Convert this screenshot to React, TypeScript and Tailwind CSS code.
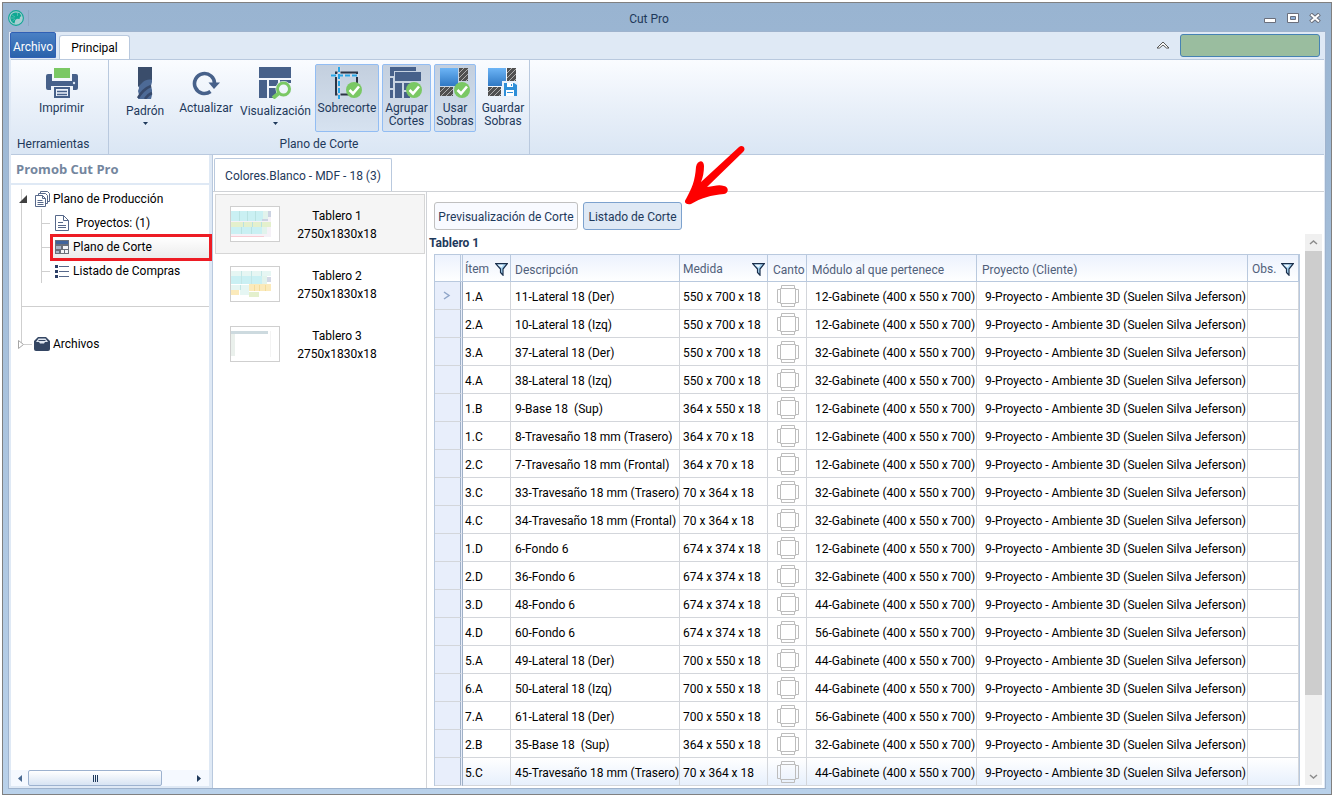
import React from 'react'
import clsx from 'clsx'

interface Piece {
  item: string
  desc: string
  size: string
  module: number
}

const PIECES: Piece[] = [
  { item: '1.A', desc: '11-Lateral 18 (Der)', size: '550 x 700 x 18', module: 12 },
  { item: '2.A', desc: '10-Lateral 18 (Izq)', size: '550 x 700 x 18', module: 12 },
  { item: '3.A', desc: '37-Lateral 18 (Der)', size: '550 x 700 x 18', module: 32 },
  { item: '4.A', desc: '38-Lateral 18 (Izq)', size: '550 x 700 x 18', module: 32 },
  { item: '1.B', desc: '9-Base 18  (Sup)', size: '364 x 550 x 18', module: 12 },
  { item: '1.C', desc: '8-Travesaño 18 mm (Trasero)', size: '364 x 70 x 18', module: 12 },
  { item: '2.C', desc: '7-Travesaño 18 mm (Frontal)', size: '364 x 70 x 18', module: 12 },
  { item: '3.C', desc: '33-Travesaño 18 mm (Trasero)', size: '70 x 364 x 18', module: 32 },
  { item: '4.C', desc: '34-Travesaño 18 mm (Frontal)', size: '70 x 364 x 18', module: 32 },
  { item: '1.D', desc: '6-Fondo 6', size: '674 x 374 x 18', module: 12 },
  { item: '2.D', desc: '36-Fondo 6', size: '674 x 374 x 18', module: 32 },
  { item: '3.D', desc: '48-Fondo 6', size: '674 x 374 x 18', module: 44 },
  { item: '4.D', desc: '60-Fondo 6', size: '674 x 374 x 18', module: 56 },
  { item: '5.A', desc: '49-Lateral 18 (Der)', size: '700 x 550 x 18', module: 44 },
  { item: '6.A', desc: '50-Lateral 18 (Izq)', size: '700 x 550 x 18', module: 44 },
  { item: '7.A', desc: '61-Lateral 18 (Der)', size: '700 x 550 x 18', module: 56 },
  { item: '2.B', desc: '35-Base 18  (Sup)', size: '364 x 550 x 18', module: 32 },
  { item: '5.C', desc: '45-Travesaño 18 mm (Trasero)', size: '70 x 364 x 18', module: 44 },
]

/* ---------- icons ---------- */

const AppLogo = () => (
  <svg width="16" height="16" viewBox="0 0 16 16">
    <circle cx="8" cy="8" r="7.4" fill="#a9cfd3" stroke="#12a594" strokeWidth="1.1" />
    <path d="M7.500 2.500C3.500 3 2 6 2.500 9c.5 2.500 2 4 4 4.500l.8-3.500L9 8.800l2.500.2.500-2 1.500-1-2-3z" fill="#0fa893" />
    <path d="M4 5l3 2M3 8h3.500M4.500 11L7 9M9.500 3v3" stroke="#7cc6be" strokeWidth=".6" />
  </svg>
)

const PrinterIcon = () => (
  <svg width="32" height="30" viewBox="0 0 32 30">
    <path d="M8 0h16v10H8z" fill="#7ac864" />
    <path d="M2 6h4v7h20V6h4a2 2 0 0 1 2 2v12a2 2 0 0 1-2 2h-3v-4H5v4H2a2 2 0 0 1-2-2V8a2 2 0 0 1 2-2z" fill="#47618a" />
    <circle cx="28" cy="15" r="1.200" fill="#e3ecf7" />
    <path d="M9 20h14v9H9z" fill="#edf3fb" stroke="#47618a" strokeWidth="2" />
    <path d="M11 23.500h10M11 26.500h10" stroke="#47618a" strokeWidth="1.400" />
  </svg>
)

const DrillIcon = () => (
  <svg width="16" height="32" viewBox="0 0 16 32">
    <path d="M1 0h14v15l-1 4 1 4v5l-1 4H1l1-4-1-4 1-3-1-5z" fill="#4d6a96" />
    <path d="M1 0h14v13C12 12 8 13 6 15l-5 5z" fill="#3a4d6b" />
    <path d="M14 19C9 21 5 24 1 31M15 26c-3 1-5 3-7 6" stroke="#37496a" strokeWidth="2.500" fill="none" />
  </svg>
)

const RefreshIcon = () => (
  <svg width="28" height="25" viewBox="0 0 28 25">
    <path d="M18.500 20.500A10 10 0 1 1 22.500 13" fill="none" stroke="#47618a" strokeWidth="3.600" />
    <path d="M16.500 11.500H28l-6 6.500z" fill="#47618a" />
  </svg>
)

const ViewIcon = () => (
  <svg width="33" height="32" viewBox="0 0 33 32">
    <path d="M0 0h32v11H0zM0 13h8v18H0zM10 13h9v6h-9zM10 21h7v10h-7zM21 13h11v3H21z" fill="#47618a" />
    <circle cx="24.500" cy="22" r="8" fill="#e6eef8" />
    <circle cx="24.500" cy="22" r="6" fill="#eef5fb" stroke="#7ac864" strokeWidth="3" />
    <path d="M20 26l-6 5" stroke="#7ac864" strokeWidth="4" />
  </svg>
)

const Check = ({ x, y }: { x: number; y: number }) => (
  <g transform={`translate(${x} ${y})`}>
    <circle cx="8" cy="8" r="8" fill="#7ac864" />
    <path d="M3.500 8l3.500 3.500 6-7" stroke="#fff" strokeWidth="2.600" fill="none" />
  </g>
)

const OvercutIcon = () => (
  <svg width="32" height="32" viewBox="0 0 32 32">
    <path d="M5 5.500h21v22H5z" fill="none" stroke="#2c3444" strokeWidth="2" />
    <path d="M8 0v32M0 8.500h28" stroke="#cfdae8" strokeWidth="3" />
    <path d="M8 0v32M0 8.500h28" stroke="#27a5e6" strokeWidth="2" strokeDasharray="5 2" />
    <Check x={15} y={15} />
  </svg>
)

const GroupIcon = () => (
  <svg width="33" height="32" viewBox="0 0 33 32">
    <path d="M0 0h26v4H4v5H0zM5 5h26v9H5zM0 11h3v10H0zM5 16h7v15H5zM0 23h3v8H0zM14 16h12v7H14zM14 25h6v6h-6z" fill="#47618a" />
    <Check x={16} y={15} />
  </svg>
)

const Hatch = ({ id }: { id: string }) => (
  <>
    <defs>
      <linearGradient id={`${id}-g`} x1="0" y1="0" x2="0" y2="1">
        <stop offset="0" stopColor="#6db5f6" />
        <stop offset="1" stopColor="#2f78c4" />
      </linearGradient>
      <pattern id={`${id}-h`} width="5" height="5" patternUnits="userSpaceOnUse">
        <path d="M0 0h5v5H0z" fill="#505050" />
        <path d="M-1 1l2-2M0 5l5-5M4 6l2-2" stroke="#b0b0b0" strokeWidth="1" />
      </pattern>
    </defs>
    <path d="M0 1h18v18H0z" fill={`url(#${id}-g)`} />
    <path d="M19 1h9v13h-9zM0 20h13v9H0z" fill={`url(#${id}-h)`} />
  </>
)

const UseIcon = () => (
  <svg width="30" height="32" viewBox="0 0 30 32">
    <Hatch id="use" />
    <Check x={14} y={15} />
  </svg>
)

const SaveIcon = () => (
  <svg width="30" height="32" viewBox="0 0 30 32">
    <Hatch id="save" />
    <path d="M14 14h16v16H14z" fill="#eaf1fa" />
    <path d="M16 16h10l3 2v11H16z" fill="#2f8fd8" />
    <path d="M19 16h6v4h-6zM18 23h8v6h-8z" fill="#fff" />
    <path d="M23 17h1v2h-1zM19 25h6v1h-6z" fill="#2f8fd8" />
  </svg>
)

const FilterIcon = () => (
  <svg width="13" height="13" viewBox="0 0 13 13" className="shrink-0">
    <path d="M.7.700h11.600L8 6v6.200L5.500 9.500V6z" fill="#a8d5f3" stroke="#1a2f4c" strokeWidth="1.200" />
    <path d="M2.500 1.800h6L6.500 4.500z" fill="#eef8ff" />
  </svg>
)

const EdgeIcon = () => (
  <svg width="22" height="22" viewBox="0 0 22 22" fill="none" stroke="#bdbdbd" className="mx-auto block">
    <path d="M4.500.5h13v3h-13zM4.500 18.500h13v3h-13zM.5 4.500h3v13h-3zM18.500 4.500h3v13h-3zM3.500 3.500h15v15h-15z" />
  </svg>
)

const StackIcon = () => (
  <svg width="16" height="16" viewBox="0 0 16 16" fill="#fff" stroke="#56688a" className="shrink-0">
    <path d="M5.500.5h7l2 2v8h-9z" />
    <path d="M3.500 2.500h7l2 2v8h-9z" />
    <path d="M.5 4.500h7l3 3v8H.5z" />
    <path d="M7.500 4.500v3h3M2.500 9.500h5M2.500 11.500h6M2.500 13.500h6" fill="none" />
  </svg>
)

const DocIcon = () => (
  <svg width="14" height="16" viewBox="0 0 14 16" fill="#fff" stroke="#56688a" className="shrink-0">
    <path d="M.5.500h8l5 5v10H.5z" />
    <path d="M8.500.500v5h5M3 7.500h5M3 10.500h8M3 12.500h8" fill="none" />
  </svg>
)

const PlanIcon = () => (
  <svg width="14" height="14" viewBox="0 0 14 14" className="shrink-0">
    <path d="M0 0h14v14H0z" fill="#6a6f79" />
    <path d="M1 1h12v3H1z" fill="#3f639b" />
    <path d="M1 6h5v3H1zM1 11h3v2H1z" fill="#aab6c9" />
    <path d="M8 6h5v3H8zM6 10h3v3H6zM10 10h3v3h-3z" fill="#f3f3f6" />
  </svg>
)

const ListIcon = () => (
  <svg width="14" height="13" viewBox="0 0 14 13" className="shrink-0">
    <path d="M0 0h3v3H0zM0 5h3v3H0zM0 10h3v3H0z" fill="#2c3f66" />
    <path d="M4 1.500h10M4 6.500h10M4 11.500h10" stroke="#56688a" />
  </svg>
)

const ArchiveIcon = () => (
  <svg width="16" height="14" viewBox="0 0 16 14" className="shrink-0">
    <path d="M4 0h8l4 4v8a2 2 0 0 1-2 2H2a2 2 0 0 1-2-2V4z" fill="#344663" />
    <path d="M4.500 1.500h7L14 5h-3l-1 1.500H6L5 5H2z" fill="#dfe6f0" />
    <path d="M4.500 3.500h7" stroke="#344663" />
  </svg>
)

const Chevron = ({ d, className }: { d: string; className?: string }) => (
  <svg width="9" height="9" viewBox="0 0 9 9" fill="none" stroke="currentColor" strokeWidth="1.500" className={className}>
    <path d={d} />
  </svg>
)

/* ---------- ribbon ---------- */

interface RibbonButtonProps {
  icon: React.ReactNode
  label: string
  width: string
  active?: boolean
  menu?: boolean
}

function RibbonButton({ icon, label, width, active, menu }: RibbonButtonProps) {
  return (
    <button
      aria-pressed={active}
      className={clsx(
        'flex h-[68px] shrink-0 flex-col items-center rounded-xs border leading-[13px] text-[#1e395b]',
        width,
        active ? 'border-[#92bdf3] bg-linear-to-b from-[#c3cfde] to-[#d6e2f0]' : 'border-transparent'
      )}
    >
      <span className="flex h-9 items-center justify-center">{icon}</span>
      <span className={clsx('flex justify-center text-center', menu ? 'mt-1' : 'mt-px')}>{label}</span>
      {menu && (
        <svg width="5" height="3" viewBox="0 0 5 3" className="mt-1">
          <path d="M0 0h5L2.500 3z" fill="#1e395b" />
        </svg>
      )}
    </button>
  )
}

function Ribbon() {
  return (
    <div className="ml-px flex h-24 shrink-0 border-y border-[#b9c9de] bg-linear-to-b from-[#fafcff] via-[#e9f0f9] to-[#dae6f4]">
      <div className="flex w-[98px] shrink-0 flex-col border-r border-[#b9c9de] pt-1">
        <div className="flex justify-center pl-1">
          <RibbonButton icon={<PrinterIcon />} label="Imprimir" width="w-14" />
        </div>
        <span className="pt-1 pl-1.5 text-[#1e395b]">Herramientas</span>
      </div>
      <div className="flex w-[421px] shrink-0 flex-col border-r border-[#b9c9de] pt-1 pl-2">
        <div className="flex gap-[3px]">
          <RibbonButton icon={<DrillIcon />} label="Padrón" width="w-14" menu />
          <RibbonButton icon={<RefreshIcon />} label="Actualizar" width="w-[60px]" />
          <RibbonButton icon={<ViewIcon />} label="Visualización" width="w-[73px]" menu />
          <RibbonButton icon={<OvercutIcon />} label="Sobrecorte" width="w-16" active />
          <RibbonButton icon={<GroupIcon />} label="Agrupar Cortes" width="w-[49px]" active />
          <RibbonButton icon={<UseIcon />} label="Usar Sobras" width="w-[42px]" active />
          <RibbonButton icon={<SaveIcon />} label="Guardar Sobras" width="w-12" />
        </div>
        <span className="pt-1 pr-2 text-center text-[#1e395b]">Plano de Corte</span>
      </div>
    </div>
  )
}

/* ---------- left tree ---------- */

function TreeItem({ icon, label, selected }: { icon: React.ReactNode; label: string; selected?: boolean }) {
  return (
    <li className="flex h-6 items-center">
      <span className="h-px w-2 shrink-0 bg-[#cfcfcf]" />
      <a
        href="#"
        className={clsx(
          'flex flex-1 items-center',
          selected ? 'h-[27px] gap-1 border-3 border-[#ed1c24] bg-linear-to-b from-white to-[#ececec] pl-0.5' : 'gap-1 pl-[5px]'
        )}
      >
        {icon}
        <span className="whitespace-pre">{label}</span>
      </a>
    </li>
  )
}

function Sidebar() {
  return (
    <aside className="ml-px flex w-[201px] shrink-0 flex-col bg-[#dfe9f5]">
      <h2 className="mr-[3px] h-[30px] shrink-0 border-b-2 border-[#dfe9f5] bg-white pt-1.5 pl-[5px] font-['Open_Sans'] text-[13px] font-bold text-[#74869e]">Promob Cut Pro</h2>
      <nav className="relative flex-1">
        <div className="absolute inset-y-0 right-[3px] left-0 bg-white" />
        <span className="absolute top-1 left-[10px] h-[154px] w-px bg-[#cfcfcf]" />
        <div className="relative flex h-6 items-center pt-1 pl-2">
          <svg width="8" height="8" viewBox="0 0 8 8" className="mr-2"><path d="M8 0v8H0z" fill="#404040" /></svg>
          <StackIcon />
          <a href="#" className="pl-[2px]">Plano de Producción</a>
        </div>
        <ul className="relative ml-[30px] border-l border-[#cfcfcf] pt-0.5">
          <TreeItem icon={<DocIcon />} label=" Proyectos: (1)" />
          <TreeItem icon={<PlanIcon />} label="Plano de Corte" selected />
          <TreeItem icon={<ListIcon />} label="Listado de Compras" />
        </ul>
        <div className="relative mt-[23px] mr-[3px] ml-[10px] h-px bg-[#cfcfcf]" />
        <div className="relative mt-[25px] flex h-6 items-center pl-[7px]">
          <svg width="6" height="9" viewBox="0 0 6 9"><path d="M.5.500l5 4-5 4z" fill="#fff" stroke="#a6a6a6" /></svg>
          <span className="mr-0.5 h-px w-2 bg-[#cfcfcf]" />
          <ArchiveIcon />
          <a href="#" className="pl-[3px]">Archivos</a>
        </div>
      </nav>
      <div className="mr-[3px] mb-0.5 flex h-4 shrink-0 items-center bg-[#f5f9ff]">
        <button aria-label="Izquierda" className="flex w-[17px] justify-center">
          <svg width="4" height="7" viewBox="0 0 4 7"><path d="M4 0v7L0 3.500z" fill="#4a6a92" /></svg>
        </button>
        <span className="flex h-4 w-[134px] items-center justify-center gap-px rounded-xs border border-[#9db2cf] bg-linear-to-b from-white to-[#d8e4f3]">
          <i className="h-[7px] w-px bg-[#1e395b]" />
          <i className="h-[7px] w-px bg-[#1e395b]" />
          <i className="h-[7px] w-px bg-[#1e395b]" />
        </span>
        <button aria-label="Derecha" className="ml-auto flex w-5 justify-center">
          <svg width="4" height="7" viewBox="0 0 4 7"><path d="M0 0v7l4-3.500z" fill="#1e395b" /></svg>
        </button>
      </div>
    </aside>
  )
}

/* ---------- boards ---------- */

const Board1 = () => (
  <svg width="48" height="34" viewBox="0 0 48 34" className="block">
    <path d="M0 4h40v26H0z" fill="#f5f1f7" />
    <path d="M0 4h32v10H0zM0 20h31v7H0z" fill="#caf0f3" />
    <path d="M0 15h40v5H0z" fill="#e4f0cd" />
    <path d="M32 4h5v8h-5zM31 20h5v7h-5z" fill="#e2f3ec" />
    <path d="M37 4h3v6h-3zM31 12h6v2h-6z" fill="#ccd3e2" />
    <path d="M0 29h33v1H0z" fill="#f8cdd5" />
    <path d="M8.500 4v10M16.500 4v10M24.500 4v10M12.500 15v5M21.500 15v5M30.500 15v5M10.500 20v7M20.500 20v7" stroke="#b9e2e2" />
  </svg>
)

const Board2 = () => (
  <svg width="48" height="34" viewBox="0 0 48 34" className="block">
    <path d="M0 4h40v5H0zM0 18h18v5H0zM9 23h9v5H9z" fill="#e6f6f3" />
    <path d="M0 9h31v8H0z" fill="#caf0f3" />
    <path d="M31 9h5v8h-5z" fill="#e2f3ec" />
    <path d="M36 10h4v5h-4z" fill="#d3d8e6" />
    <path d="M18 17h22v7H18zM0 23h8v5H0z" fill="#fbeabb" />
    <path d="M18 25h10v5H18z" fill="#e4f0cd" />
    <path d="M10.500 4v13M20.500 4v13M30.500 4v5M9.500 18v5" stroke="#c3e6e6" />
    <path d="M23.500 18v6M28.500 18v6M34.500 18v6" stroke="#f3dc9c" />
  </svg>
)

const Board3 = () => (
  <svg width="48" height="34" viewBox="0 0 48 34" className="block">
    <path d="M0 4h37v3H0z" fill="#cddadf" />
    <path d="M0 7h4v22H0z" fill="#eaf0ec" />
    <path d="M39.500 4v26" stroke="#f3f3f3" />
  </svg>
)

const BOARDS = [
  { name: 'Tablero 1', size: '2750x1830x18', preview: <Board1 /> },
  { name: 'Tablero 2', size: '2750x1830x18', preview: <Board2 /> },
  { name: 'Tablero 3', size: '2750x1830x18', preview: <Board3 /> },
]

function BoardList() {
  return (
    <ul className="w-[214px] shrink-0 border-r border-[#d0d3d8] pt-0.5 pl-0.5">
      {BOARDS.map((b, i) => (
        <li key={b.name}>
          <button
            className={clsx(
              'flex h-[60px] w-[210px] items-center border pl-3.5 text-black',
              i === 0 ? 'border-[#d6d6d6] bg-[#f5f5f5]' : 'border-transparent'
            )}
          >
            <span className="h-9 w-[50px] shrink-0 border border-[#cfcfcf] bg-white">{b.preview}</span>
            <span className="w-[114px] pt-0.5 text-center leading-[18px]">
              {b.name}
              <br />
              {b.size}
            </span>
          </button>
        </li>
      ))}
    </ul>
  )
}

/* ---------- cut list ---------- */

const TH = 'border-r border-b border-[#b9c9de] p-0 text-left font-normal whitespace-nowrap'
const TD = 'border-r border-b border-[#d3d6db] p-0 whitespace-pre'
const TEXT = 'block pt-0.5'

function CutTable() {
  return (
    <table className="w-full table-fixed border-separate border-spacing-0 border-t border-r border-l border-[#b9c9de]">
      <colgroup>
        <col className="w-[28px]" />
        <col className="w-[48px]" />
        <col className="w-[169px]" />
        <col className="w-[88px]" />
        <col className="w-[39px]" />
        <col className="w-[170px]" />
        <col />
        <col className="w-[51px]" />
      </colgroup>
      <thead>
        <tr className="h-[27px] bg-linear-to-b from-[#ecf2fd] to-white text-[#50607a]">
          <th className={clsx(TH, 'border-r-3 border-double')} aria-label="Fila" />
          <th className={TH}><span className="flex items-center justify-between pt-0.5 pr-0.5 pl-0.5">Ítem <FilterIcon /></span></th>
          <th className={TH}><span className="block pt-1 pl-1">Descripción</span></th>
          <th className={TH}><span className="flex items-center justify-between pt-0.5 pr-0.5 pl-[3px]">Medida <FilterIcon /></span></th>
          <th className={TH}><span className="block pt-1 pl-[5px]">Canto</span></th>
          <th className={TH}><span className="block pt-1 pl-[5px]">Módulo al que pertenece</span></th>
          <th className={TH}><span className="block pt-1 pl-[5px]">Proyecto (Cliente)</span></th>
          <th className={TH}><span className="flex items-center justify-between pt-0.5 pr-1 pl-1">Obs. <FilterIcon /></span></th>
        </tr>
      </thead>
      <tbody>
        {PIECES.map((p, i) => (
          <tr key={p.item} className={clsx('h-7', i === PIECES.length - 1 && 'bg-linear-to-b from-white to-[#e6effc]')}>
            <td className={clsx(TD, 'border-r-3 border-double border-r-[#9fb0c6] bg-[#e8eefb] text-[#8fa5c8]')}>
              {i === 0 && <Chevron d="M1 1l5 3.500L1 8" className="mx-auto" />}
            </td>
            <td className={clsx(TD, 'pl-0.5')}><span className={TEXT}>{p.item}</span></td>
            <td className={clsx(TD, 'pl-1')}><span className={TEXT}>{p.desc}</span></td>
            <td className={clsx(TD, 'pl-[3px]')}><span className={TEXT}>{p.size}</span></td>
            <td className={clsx(TD, 'pl-0.5')}><EdgeIcon /></td>
            <td className={clsx(TD, 'pl-2')}><span className={TEXT}>{`${p.module}-Gabinete (400 x 550 x 700)`}</span></td>
            <td className={clsx(TD, 'pl-2')}><span className={TEXT}>9-Proyecto - Ambiente 3D (Suelen Silva Jeferson)</span></td>
            <td className={TD} />
          </tr>
        ))}
      </tbody>
    </table>
  )
}

function CutList() {
  return (
    <section className="relative flex min-w-0 flex-1 flex-col">
      <svg width="64" height="62" viewBox="0 0 64 62" className="absolute top-[-47px] left-[256px]">
        <path d="M56 2c3-3 8 1 4 5L24 42c7-1 12-3 17-1 5 1 5 7 0 8-13 1-23 4-33 10-4 1-8-1-5-5 6-11 9-18 10-32 1-7 8-8 8-1 0 6-1 11-3 16z" fill="#fe0000" />
      </svg>
      <div className="flex h-[42px] shrink-0 gap-[5px] pt-2.5 pl-[7px] text-[#1e395b]">
        <button className="h-7 w-36 rounded-[3px] border border-[#c0c0c0] bg-[#f8faff] pt-0.5 whitespace-nowrap">Previsualización de Corte</button>
        <button className="h-7 w-[99px] rounded-[3px] border border-[#7da2ce] bg-[#dfe9f5] pt-0.5 whitespace-nowrap">Listado de Corte</button>
      </div>
      <div className="flex min-h-0 flex-1">
        <div className="flex min-w-0 flex-1 flex-col">
          <h3 className="h-5 shrink-0 pt-px pl-0.5 font-bold text-[#1e395b]">Tablero 1</h3>
          <div className="ml-[7px] min-h-0 flex-1 overflow-hidden">
            <CutTable />
          </div>
        </div>
        <div className="mr-0.5 mb-[3px] ml-[5px] flex w-[17px] shrink-0 flex-col items-center bg-[#f0f0f0] text-[#8c8c8c]">
          <button aria-label="Arriba" className="flex h-[17px] items-center"><Chevron d="M1 6l3.500-3L8 6" /></button>
          <span className="h-[444px] w-full bg-[#cdcdcd]" />
          <button aria-label="Abajo" className="mt-auto flex h-[17px] items-center"><Chevron d="M1 3l3.500 3L8 3" /></button>
        </div>
      </div>
    </section>
  )
}

/* ---------- window ---------- */

function TitleBar() {
  return (
    <header className="grid h-7 shrink-0 grid-cols-3 items-center">
      <div className="flex items-center pt-0.5">
        <AppLogo />
        <span className="ml-1 h-4 w-px bg-[#8ea8c5]" />
      </div>
      <h1 className="pt-1 pr-9 text-center text-[#1e395b]">Cut Pro</h1>
      <div className="flex items-center justify-end gap-2.5 pt-0.5 pr-[5px]">
        <button aria-label="Minimizar">
          <svg width="13" height="12" viewBox="0 0 13 12"><path d="M.5 6.500h11v4H.5z" fill="#fff" stroke="#6a6f7c" /></svg>
        </button>
        <button aria-label="Maximizar">
          <svg width="12" height="10" viewBox="0 0 12 10"><path d="M.5.500h11v9H.5z" fill="#fff" stroke="#6a6f7c" /><path d="M3.500 3.500h5v3h-5z" fill="#8fb0d8" stroke="#6a6f7c" /></svg>
        </button>
        <button aria-label="Cerrar">
          <svg width="12" height="10" viewBox="0 0 12 10"><path d="M1.500 1l9 8M10.500 1l-9 8" stroke="#6a6f7c" strokeWidth="4" /><path d="M2 1.500l8 7M10 1.500l-8 7" stroke="#fff" strokeWidth="2" /></svg>
        </button>
      </div>
    </header>
  )
}

export default function App() {
  return (
    <div className="h-screen min-h-[600px] bg-white pt-0.5 pr-[3px] pb-0.5 pl-0.5 font-['Roboto','Open_Sans',sans-serif] text-[12px] leading-4 text-black">
      <div className="flex h-full flex-col border border-[#808080] bg-linear-to-b from-[#99b4d1] to-[#b9d1ea] px-[5px] pb-[5px]">
        <TitleBar />
        <main className="flex min-h-0 flex-1 flex-col border border-[#9fb3cd] bg-[#dfe9f5] pr-px pl-px">
          <div className="flex h-[27px] shrink-0 items-end">
            <button className="h-[26px] w-[46px] self-start rounded-t-xs border border-[#3060b5] bg-linear-to-b from-[#4a80c4] to-[#2a62ab] pt-1 text-white">Archivo</button>
            <button className="ml-[3px] h-6 w-[71px] rounded-t-[3px] border border-b-0 border-[#b9c9de] bg-white pt-px">Principal</button>
            <button aria-label="Contraer" className="mr-2.5 mb-2.5 ml-auto text-[#555]">
              <svg width="14" height="8" viewBox="0 0 14 8" fill="#fff" stroke="#555"><path d="M1 7l6-6 6 6h-2.500L7 4 3.500 7z" /></svg>
            </button>
            <div className="mr-1 mb-[2px] h-[23px] w-[140px] rounded-[3px] border border-[#4682b4] bg-[#9abd9f]" />
          </div>
          <Ribbon />
          <div className="flex min-h-0 flex-1">
            <Sidebar />
            <div className="flex min-w-0 flex-1 flex-col border-l border-[#b9c9de] bg-white">
              <div className="flex h-[37px] shrink-0 items-end border-b border-[#cfd2d6] pl-px">
                <button className="h-[33px] w-[178px] rounded-t-xs border border-b-0 border-[#b9c9de] bg-white pt-0.5 text-[#1e395b]">Colores.Blanco - MDF - 18 (3)</button>
              </div>
              <div className="flex min-h-0 flex-1">
                <BoardList />
                <CutList />
              </div>
            </div>
          </div>
        </main>
      </div>
    </div>
  )
}
